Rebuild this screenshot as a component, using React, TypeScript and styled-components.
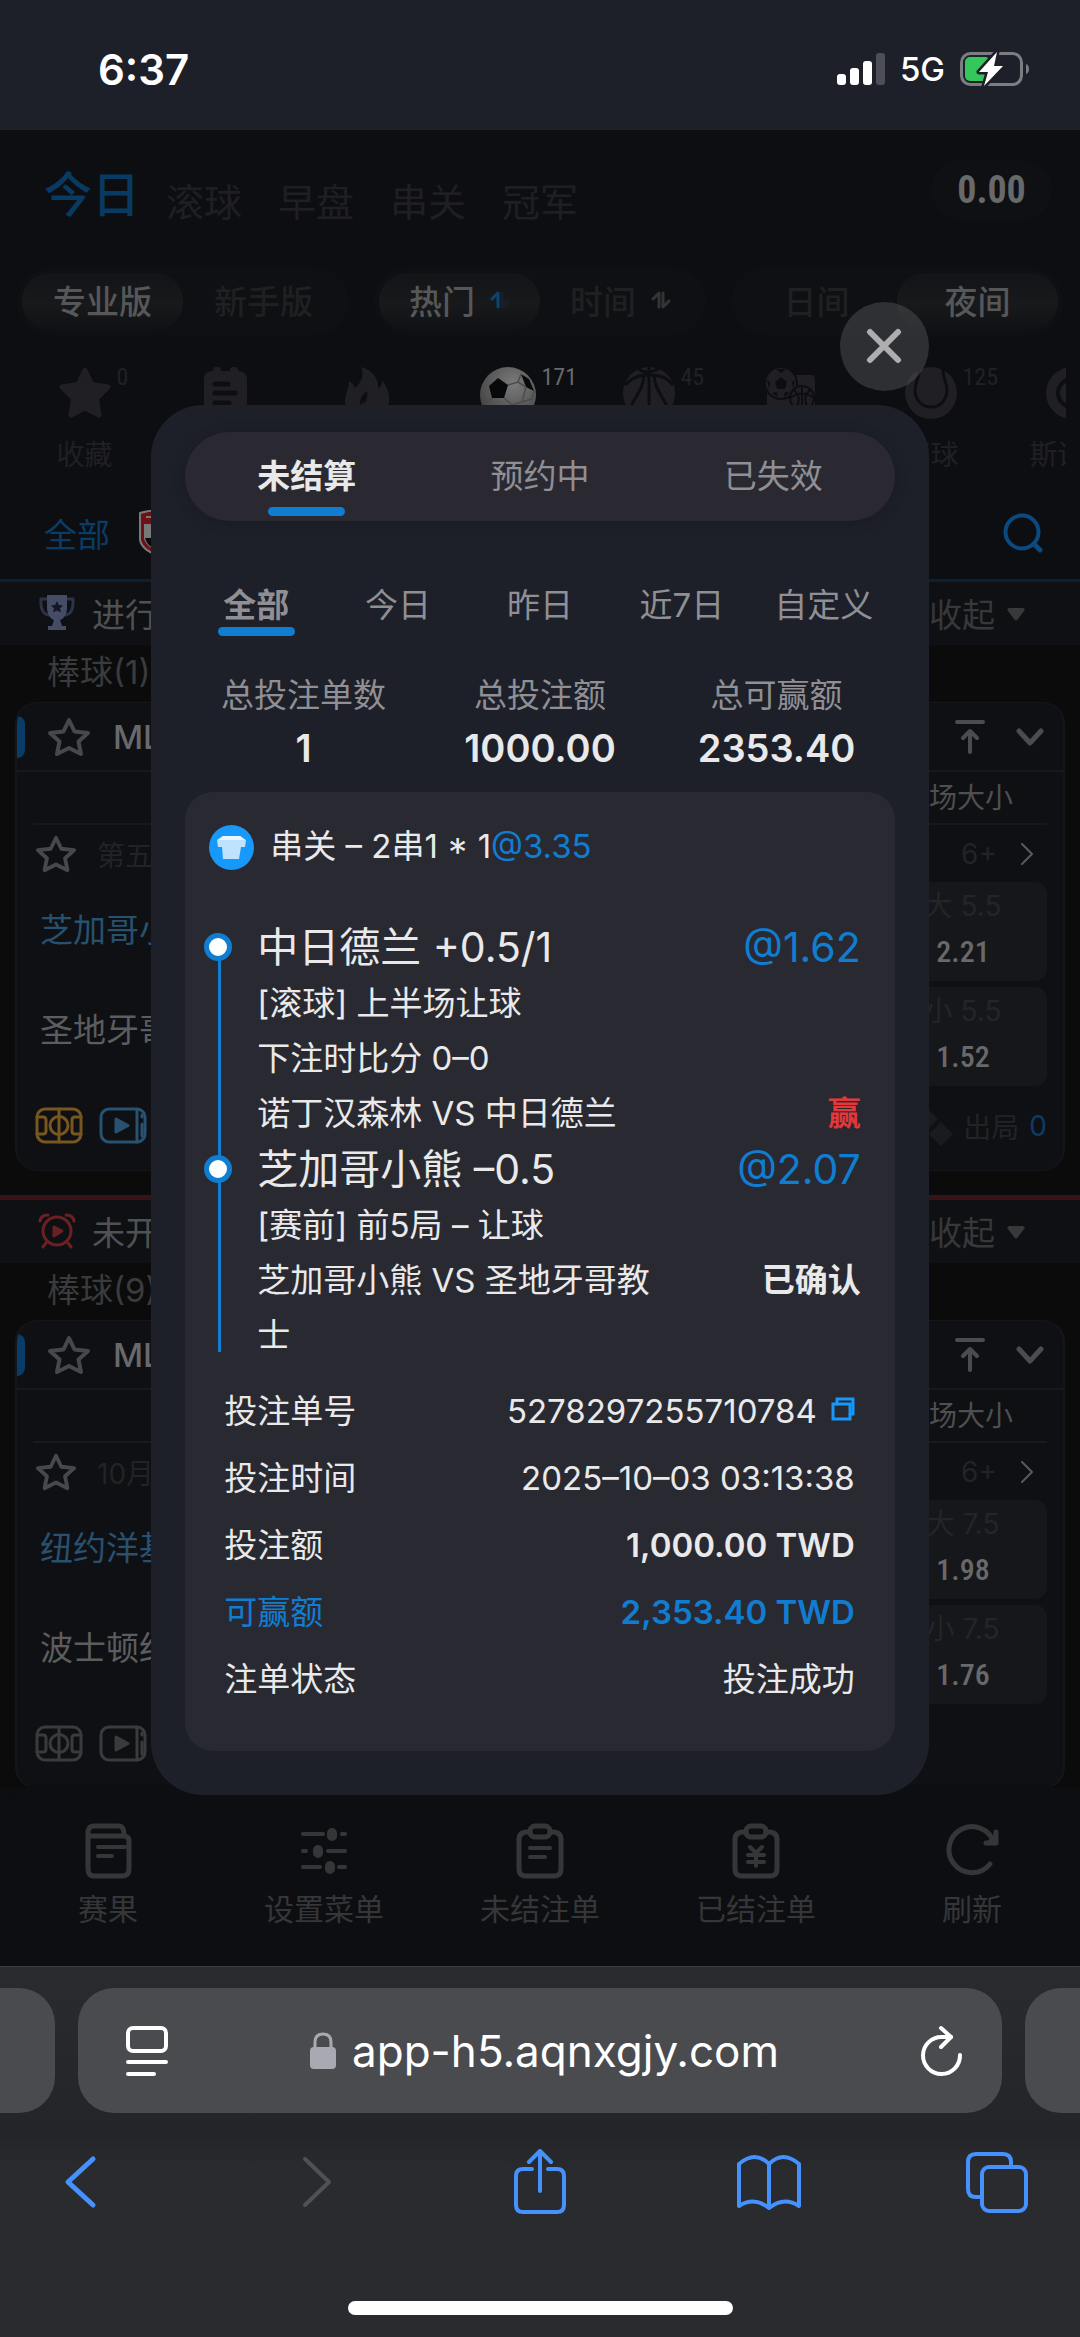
import React from "react";
import styled, { createGlobalStyle, css } from "styled-components";

const blue = "#117dd0";
const iosBlue = "#4592ff";
const condensed = `"Liberation Sans Narrow", "Roboto Condensed", Roboto, sans-serif`;

const GlobalStyle = createGlobalStyle`
  *, *::before, *::after { box-sizing: border-box; }
  body { margin: 0; background: #2a2b2f; }
  button { padding: 0; border: 0; background: none; color: inherit; font: inherit; cursor: pointer; }
  a { color: inherit; text-decoration: none; }
  h2, h3, p, dl, dd, dt, ul { margin: 0; padding: 0; font: inherit; }
  ul { list-style: none; }
  svg { display: block; flex: none; }
`;

const Phone = styled.div`
  display: flex;
  flex-direction: column;
  font-family: Inter, "Noto Sans CJK SC", sans-serif;
  font-size: 33px;
  color: #e9e9ea;
`;

/* ---------- status bar ---------- */

const StatusBar = styled.header`
  display: flex;
  align-items: center;
  justify-content: space-between;
  height: 130px;
  padding: 8px 50px 0 98px;
  background: #1e2029;
  color: #fff;
`;
const Clock = styled.time`
  font-size: 42px;
  font-weight: 600;
`;
const StatusIcons = styled.div`
  display: flex;
  align-items: center;
  gap: 15px;
  font-size: 33px;
  font-weight: 500;
`;

/* ---------- sportsbook page ---------- */

const AppScreen = styled.main`
  position: relative;
  display: flex;
  flex-direction: column;
  overflow: hidden;
  background: #0d0e12;
`;
const TopBar = styled.div`
  display: flex;
  align-items: center;
  justify-content: space-between;
  height: 120px;
  padding: 0 28px 0 44px;
`;
const MainTabs = styled.nav`
  display: flex;
  align-items: flex-end;
  gap: 36px;
  padding-top: 10px;
  color: #1f1f23;
  font-size: 38px;
`;
const MainTab = styled.button<{ $active?: boolean }>`
  line-height: 46px;
  ${(p) =>
    p.$active &&
    css`
      margin-right: -10px;
      color: #093a61;
      font-size: 48px;
      font-weight: 500;
      line-height: 60px;
    `}
`;
const Balance = styled.div`
  width: 121px;
  border-radius: 30px;
  background: #0f1013;
  color: #68696a;
  font-family: ${condensed};
  font-size: 38px;
  font-weight: 700;
  line-height: 60px;
  text-align: center;
`;
const SwitchRow = styled.div`
  display: grid;
  grid-template-columns: repeat(3, 1fr);
  gap: 25px;
  padding: 18px 17px 0;
`;
const SwitchGroup = styled.div`
  display: grid;
  grid-template-columns: 1fr 1fr;
  height: 67px;
  padding: 5px;
  border-radius: 34px;
  background: #0f1013;
`;
const SwitchButton = styled.button<{ $active?: boolean }>`
  display: flex;
  align-items: center;
  justify-content: center;
  gap: 15px;
  padding-bottom: 4px;
  border-radius: 28px;
  color: ${(p) => (p.$active ? "#565758" : "#1f2022")};
  background: ${(p) => (p.$active ? "linear-gradient(#131417, #18191b 55%, #101114)" : "none")};
  font-weight: 500;
`;

const Sports = styled.ul`
  display: flex;
  height: 153px;
  margin: 0 14px;
  padding-top: 32px;
  overflow: hidden;
  color: #202024;
`;
const Sport = styled.li`
  display: flex;
  flex: 0 0 141px;
  flex-direction: column;
  align-items: center;
  gap: 17px;
  font-size: 28px;
  line-height: 38px;
  white-space: nowrap;
`;
const SportIcon = styled.div`
  position: relative;
`;
const Count = styled.span<{ $active?: boolean }>`
  position: absolute;
  top: -4px;
  left: calc(100% + 6px);
  color: ${(p) => (p.$active ? "#68696a" : "#202124")};
  font-family: ${condensed};
  font-size: 24px;
  line-height: 28px;
`;

const LeagueBar = styled.div`
  display: flex;
  align-items: center;
  height: 94px;
  padding: 0 37px 2px 44px;
  border-bottom: 3px solid #0d2133;
  color: #0a3d66;
`;
const LeagueLogo = styled.div`
  flex: 1;
  padding-left: 28px;
`;

const SectionHead = styled.h2<{ $line?: boolean }>`
  display: flex;
  align-items: center;
  height: ${(p) => (p.$line ? 68 : 63)}px;
  padding: 0 55px 2px 38px;
  border-top: ${(p) => (p.$line ? "5px solid #371216" : "0")};
  background: #0f1013;
  color: #505152;
  gap: 16px;
`;
const SectionTitle = styled.span`
  flex: 1;
`;
const Collapse = styled.button`
  display: flex;
  align-items: center;
  gap: 12px;
  color: #37383a;
`;
const ListArea = styled.div`
  background: #0b0b0c;
`;
const Category = styled.h3`
  height: 57px;
  padding-left: 47px;
  color: #3a3b3c;
  line-height: 54px;
`;
const Card = styled.article`
  margin: 0 15px 24px;
  border: 2px solid #14161a;
  border-top-width: 1px;
  border-bottom-width: 1px;
  border-radius: 22px;
  background: #0f1013;
  overflow: hidden;
`;
const LastCard = styled(Card)`
  margin-bottom: 0;
`;
const CardHead = styled.div`
  display: flex;
  align-items: center;
  height: 69px;
  padding-right: 18px;
  border-bottom: 2px solid #17191d;
  color: #68696a;
  font-weight: 500;
`;
const Accent = styled.span`
  width: 8px;
  height: 42px;
  margin-right: 22px;
  border-radius: 0 10px 10px 0;
  background: #093c66;
`;
const LeagueName = styled.span`
  flex: 1;
  padding-left: 22px;
`;
const HeadActions = styled.span`
  display: flex;
  gap: 30px;
  color: #4b4c52;
`;
const CardBody = styled.div`
  padding: 0 16px;
`;
const MarketHead = styled.div`
  height: 53px;
  padding-right: 34px;
  border-bottom: 2px solid #17191d;
  color: #4e4f50;
  font-size: 28px;
  line-height: 53px;
  text-align: right;
`;
const InfoRow = styled.div`
  display: flex;
  align-items: center;
  height: 57px;
  padding: 0 14px 0 2px;
  color: #222326;
  font-size: 28px;
`;
const InfoText = styled.span`
  flex: 1;
  padding-left: 20px;
`;
const InfoMore = styled.button`
  display: flex;
  align-items: center;
  gap: 24px;
`;
const Board = styled.div`
  display: grid;
  grid-template-columns: 1fr 168px;
`;
const Teams = styled.div`
  display: grid;
  grid-template-rows: 92px 108px;
  align-items: center;
  padding-left: 7px;
  color: #5c5d5e;
`;
const HomeTeam = styled.span`
  color: #28506f;
`;
const OddsColumn = styled.div`
  display: grid;
  gap: 6px;
`;
const OddsButton = styled.button`
  display: flex;
  flex-direction: column;
  align-items: center;
  height: 99px;
  padding-top: 1px;
  border-radius: 12px;
  background: #16171a;
  color: #242528;
  font-size: 28px;
  line-height: 46px;
`;
const Price = styled.strong`
  color: #68696a;
  font-family: ${condensed};
  font-size: 30px;
  font-weight: 500;
`;
const CardFoot = styled.div`
  display: flex;
  align-items: center;
  height: 84px;
  gap: 16px;
  padding: 0 0 5px 2px;
  color: #222326;
  font-size: 28px;
`;
const Outs = styled.span`
  display: flex;
  align-items: center;
  flex: 1;
  justify-content: flex-end;
  gap: 10px;
`;
const OutCount = styled.span`
  color: #0a3d66;
`;

const BottomNav = styled.nav`
  position: relative;
  display: grid;
  grid-template-columns: repeat(5, 1fr);
  height: 181px;
  margin-top: -4px;
  padding-top: 38px;
  border-radius: 40px 40px 0 0;
  background: #0d0e12;
`;
const NavButton = styled.button`
  display: flex;
  flex-direction: column;
  align-items: center;
  gap: 10px;
  color: #353638;
  font-size: 30px;
  line-height: 40px;
`;

/* ---------- bet slip dialog ---------- */

const Overlay = styled.div`
  position: absolute;
  inset: 0;
  display: flex;
  align-items: center;
  justify-content: center;
`;
const DialogWrap = styled.div`
  display: flex;
  flex-direction: column;
  width: 72%;
  gap: 14px;
`;
const CloseButton = styled.button`
  display: grid;
  place-items: center;
  align-self: flex-end;
  width: 89px;
  height: 89px;
  border-radius: 50%;
  background: rgba(94, 92, 97, 0.42);
  color: #aeaeb0;
`;
const Dialog = styled.section`
  padding: 27px 34px 44px;
  border-radius: 52px;
  background: #1e2029;
`;
const Underlined = css`
  &::after {
    content: "";
    width: 77px;
    height: 9px;
    border-radius: 5px;
    background: ${blue};
  }
`;
const StatusTabs = styled.div`
  display: grid;
  grid-template-columns: repeat(3, 1fr);
  height: 89px;
  padding: 0 5px;
  border-radius: 45px;
  background: #2a2932;
  box-shadow: 0 2px 12px rgba(16, 17, 24, 0.35);
`;
const StatusTab = styled.button<{ $active?: boolean }>`
  display: flex;
  flex-direction: column;
  align-items: center;
  padding-top: 20px;
  color: ${(p) => (p.$active ? "#e9e9ea" : "#8f8f94")};
  font-weight: ${(p) => (p.$active ? 700 : 400)};
  line-height: 48px;
  gap: 7px;
  ${(p) => p.$active && Underlined}
`;
const DateTabs = styled.div`
  display: grid;
  grid-template-columns: repeat(5, 1fr);
  padding-top: 60px;
`;
const DateTab = styled.button<{ $active?: boolean }>`
  display: flex;
  flex-direction: column;
  align-items: center;
  height: 63px;
  padding-top: 2px;
  color: #8f8f94;
  font-weight: ${(p) => (p.$active ? 700 : 400)};
  line-height: 44px;
  white-space: nowrap;
  ${(p) => p.$active && Underlined}
`;
const Totals = styled.dl`
  display: grid;
  grid-template-columns: repeat(3, 1fr);
  padding: 24px 0 18px;
  text-align: center;
`;
const TotalLabel = styled.dt`
  color: #8f8f94;
  line-height: 54px;
`;
const TotalValue = styled.dd`
  font-size: 38px;
  font-weight: 600;
  line-height: 52px;
`;
const Slip = styled.div`
  padding: 26px 34px 38px 24px;
  border-radius: 28px;
  background: #292932;
`;
const SlipHead = styled.p`
  display: flex;
  align-items: center;
  height: 60px;
  gap: 16px;
  line-height: 56px;
`;
const SlipName = styled.span`
  height: 60px;
`;
const Blue = styled.span`
  color: ${blue};
`;
const Legs = styled.div`
  position: relative;
  margin-top: 41px;
  &::before {
    content: "";
    position: absolute;
    top: 28px;
    bottom: 11px;
    left: 9px;
    width: 3px;
    background: ${blue};
  }
`;
const Leg = styled.div`
  position: relative;
  padding-left: 48px;
  line-height: 55px;
  &::before {
    content: "";
    position: absolute;
    top: 14px;
    left: -5px;
    width: 28px;
    height: 28px;
    border: 5px solid ${blue};
    border-radius: 50%;
    background: #fff;
  }
`;
const LegTitle = styled.h3`
  display: flex;
  justify-content: space-between;
  font-size: 41px;
  line-height: 57px;
`;
const LegMatch = styled.p`
  display: flex;
  align-items: flex-start;
  justify-content: space-between;
`;
const MatchName = styled.span`
  max-width: 69%;
`;
const LegState = styled.strong<{ $win?: boolean }>`
  color: ${(p) => (p.$win ? "#e2383b" : "#e9e9ea")};
`;
const Details = styled.dl`
  padding: 15px 6px 0 15px;
  line-height: 67px;
`;
const DetailRow = styled.div<{ $blue?: boolean }>`
  display: flex;
  justify-content: space-between;
  color: ${(p) => (p.$blue ? blue : "inherit")};
`;
const DetailValue = styled.dd<{ $bold?: boolean }>`
  display: flex;
  gap: 14px;
  font-weight: ${(p) => (p.$bold ? 600 : 400)};
`;
const CopyButton = styled.button`
  height: 62px;
`;

/* ---------- browser chrome ---------- */

const Browser = styled.footer`
  border-top: 1px solid #3f3f42;
  background: linear-gradient(#2a2b2e, #242529 45%, #2a2b2f 55%);
`;
const AddressRow = styled.div`
  display: grid;
  grid-template-columns: 55px 1fr 55px;
  gap: 23px;
  padding-top: 21px;
`;
const SidePage = styled.div<{ $right?: boolean }>`
  border-radius: ${(p) => (p.$right ? "36px 0 0 36px" : "0 36px 36px 0")};
  background: #4a4b4e;
`;
const AddressBar = styled.div`
  display: flex;
  align-items: center;
  justify-content: space-between;
  height: 125px;
  padding: 0 38px 0 47px;
  border-radius: 36px;
  background: #4a4b4e;
  color: #fff;
`;
const Address = styled.a`
  display: flex;
  align-items: center;
  gap: 16px;
  font-size: 44px;
`;
const Toolbar = styled.div`
  display: flex;
  justify-content: space-between;
  padding: 36px 50px 0 46px;
  color: ${iosBlue};
`;
const HomeBar = styled.div`
  width: 385px;
  height: 14px;
  margin: 86px auto 22px;
  border-radius: 7px;
  background: #fff;
`;

/* ---------- icons ---------- */

type StrokeProps = { w: number; h: number; sw?: number; color?: string; children: React.ReactNode };
const Line = ({ w, h, sw = 4, color = "currentColor", children }: StrokeProps) => (
  <svg width={w} height={h} viewBox={`0 0 ${w} ${h}`} fill="none" stroke={color} strokeWidth={sw} strokeLinecap="round" strokeLinejoin="round" aria-hidden="true">
    {children}
  </svg>
);

const Signal = () => (
  <svg width="48" height="32" viewBox="0 0 48 32" fill="#fff" aria-hidden="true">
    <rect x="0" y="21" width="9" height="11" rx="3" />
    <rect x="13" y="15" width="9" height="17" rx="3" />
    <rect x="26" y="8" width="9" height="24" rx="3" />
    <rect x="39" y="0" width="9" height="32" rx="3" fill="#4d4e57" />
  </svg>
);
const Battery = () => (
  <svg width="70" height="36" viewBox="0 0 70 36" aria-hidden="true">
    <rect x="1.5" y="2.5" width="60" height="31" rx="9" fill="none" stroke="#7c7d83" strokeWidth="3" />
    <rect x="5" y="6" width="25" height="24" rx="5" fill="#34c759" />
    <path d="M66 13c4 1 4 9 0 10z" fill="#7c7d83" />
    <path d="M37 1 19 21h9l-4 14 19-20h-9z" fill="#fff" stroke="#1e2029" strokeWidth="5" strokeLinejoin="round" paintOrder="stroke" />
  </svg>
);
const SortArrows = ({ up, down }: { up: string; down: string }) => (
  <svg width="20" height="18" viewBox="0 0 20 18" fill="none" strokeWidth="3" strokeLinecap="round" strokeLinejoin="round" aria-hidden="true">
    <path d="M2 8 8 2v14" stroke={up} />
    <path d="M12 2v14l6-6" stroke={down} />
  </svg>
);
const StarSolid = () => (
  <svg width="52" height="52" viewBox="0 0 52 52" fill="currentColor" stroke="currentColor" strokeWidth="5" strokeLinejoin="round" aria-hidden="true">
    <path d="m26 3 7 14.500 16 2.500-11.500 11.500L40 48l-14-7-14 7 2.500-16.500L3 20l16-2.500z" />
  </svg>
);
const Notes = () => (
  <svg width="52" height="52" viewBox="0 0 52 52" aria-hidden="true">
    <rect x="4" y="4" width="43" height="48" rx="8" fill="currentColor" />
    <rect x="13" y="0" width="8" height="8" rx="3" fill="currentColor" />
    <rect x="30" y="0" width="8" height="8" rx="3" fill="currentColor" />
    <path d="M15 17h13M15 26h20M15 36h14" stroke="#0d0e12" strokeWidth="5" strokeLinecap="round" />
  </svg>
);
const Flame = () => (
  <svg width="52" height="52" viewBox="0 0 52 52" fill="currentColor" aria-hidden="true">
    <path d="M20 0c12 3 18 12 17 22 3-2 4-5 4-9 5 7 8 14 7 22-1 10-10 17-22 17S4 45 4 34c0-8 4-12 4-20 3 2 5 4 6 7 6-5 10-13 6-21z" />
    <path d="M26 24c-5 4-8 9-7 14 2-1 3-3 3-3s1 0 1 2c3-4 4-8 3-13z" fill="#0d0e12" />
  </svg>
);
const SoccerBall = () => (
  <svg width="56" height="56" viewBox="0 0 56 56" aria-hidden="true">
    <defs>
      <radialGradient id="ball" cx="0.6" cy="0.3" r="0.8">
        <stop offset="0" stopColor="#7b7b7b" />
        <stop offset="1" stopColor="#3c3c3c" />
      </radialGradient>
    </defs>
    <circle cx="28" cy="28" r="28" fill="url(#ball)" />
    <path d="m18 11 10 7-4 13H12L9 19zM41 7l8 5 5 12-8-4z M20 54l6-9h10l4 8z" fill="#08090b" />
    <path d="m28 18 10-3 8 5M24 31l8 7-4 9M38 15l3-8M46 20l-4 15-10 3M12 31l-6 5M54 24l-2 8-10 3" stroke="#4c4c4c" strokeWidth="1.500" fill="none" />
  </svg>
);
const Basketball = () => (
  <svg width="52" height="52" viewBox="0 0 52 52" aria-hidden="true">
    <circle cx="26" cy="26" r="26" fill="currentColor" />
    <path d="M26 0v52M14 0c5 6 12 8 24 0M2 18C12 8 20 8 26 8s16 0 24 10M21 8C20 24 12 28 6 44M31 8c1 16 9 20 15 36" stroke="#0d0e12" strokeWidth="3" fill="none" />
  </svg>
);
const ComboSports = () => (
  <svg width="52" height="52" viewBox="0 0 52 52" aria-hidden="true">
    <rect x="3" y="8" width="48" height="44" rx="4" fill="currentColor" />
    <circle cx="17" cy="16" r="17" fill="#0d0e12" />
    <circle cx="17" cy="16" r="15" fill="currentColor" />
    <path d="m17 10 6 5-2 7h-8l-2-7zM12 2h10l-5 4zM3 13l3 2-1 7zM31 13l-3 2 1 7zM8 26l5-1 1 5zM26 26l-5-1-1 5z" fill="#0d0e12" />
    <circle cx="38" cy="31" r="12" fill="currentColor" stroke="#0d0e12" strokeWidth="2" />
    <path d="M38 19v24M26 31c8-6 16-6 24 0M30 23c6 6 6 10 2 18M46 23c-6 6-6 10-2 18" stroke="#0d0e12" strokeWidth="2" fill="none" />
  </svg>
);
const TennisBall = () => (
  <svg width="52" height="52" viewBox="0 0 52 52" aria-hidden="true">
    <circle cx="26" cy="26" r="26" fill="currentColor" />
    <path d="M14 0c1 12-4 14-4 23 0 10 7 17 16 17s16-7 16-17c0-9-5-11-4-23" fill="none" stroke="#0d0e12" strokeWidth="3" />
  </svg>
);
const Snooker = () => (
  <svg width="52" height="52" viewBox="0 0 52 52" aria-hidden="true">
    <circle cx="26" cy="26" r="26" fill="currentColor" />
    <circle cx="26" cy="26" r="14" fill="none" stroke="#0d0e12" strokeWidth="4" />
  </svg>
);
const Shield = () => (
  <svg width="38" height="46" viewBox="0 0 38 46" aria-hidden="true">
    <path d="M2 3Q19-2 36 3v27q-2 10-17 15Q4 40 2 30z" fill="#6d1116" stroke="#77787a" strokeWidth="2" />
    <path d="M6 14h26v15q-2 7-13 12Q8 36 6 29z" fill="#77787a" />
    <path d="M7 28h25q-2 8-13 12Q9 36 7 28z" fill="#08090b" />
    <path d="M8 7h5M16 7h6" stroke="#77787a" strokeWidth="2" />
  </svg>
);
const SearchIcon = () => (
  <Line w={40} h={40} color="#0a4a80">
    <circle cx="19" cy="19" r="16.500" />
    <path d="m31 31 6 6" strokeWidth="5" />
  </Line>
);
const Trophy = () => (
  <svg width="38" height="38" viewBox="0 0 38 38" aria-hidden="true">
    <path d="M9 5H3q-1 16 9 16M29 5h6q1 16-9 16" fill="none" stroke="#2d3347" strokeWidth="3" />
    <path d="M9 1h20v14q-1 9-7 11l2 6h4v4H10v-4h4l2-6q-6-2-7-11z" fill="#444c66" />
    <path d="m19 7 2 4 4 .500-3 3 1 4-4-2-4 2 1-4-3-3 4-.500z" fill="#151824" />
  </svg>
);
const AlarmPlay = () => (
  <Line w={38} h={36} sw={3} color="#6b2024">
    <circle cx="19" cy="18" r="14" />
    <path d="M2 8q1-6 8-6M36 8q-1-6-8-6M8 30l-3 4M30 30l3 4" />
    <path d="m16 14 8 4-8 5z" fill="#6b2024" />
  </Line>
);
const Triangle = () => (
  <svg width="18" height="17" viewBox="0 0 18 17" fill="currentColor" aria-hidden="true">
    <path d="M2 4h14q3 1 1 3l-6 8q-2 3-4 0L1 7Q-1 5 2 4z" />
  </svg>
);
const StarOutline = ({ size }: { size: number }) => (
  <svg width={size} height={size} viewBox="0 0 44 44" fill="none" stroke="#47484b" strokeWidth="4" strokeLinejoin="round" aria-hidden="true">
    <path d="m22 5 5.500 11.500L41 18l-9.500 8.500L34 39l-12-6-12 6 2.500-12.500L3 18l13.500-1.500z" />
  </svg>
);
const ToTop = () => (
  <Line w={30} h={34}>
    <path d="M2 2h26M15 32V12M8 18l7-7 7 7" />
  </Line>
);
const ChevronDown = () => (
  <Line w={30} h={34} sw={5}>
    <path d="m4 11 11 12 11-12" />
  </Line>
);
const ThinChevron = () => (
  <Line w={12} h={22} sw={2} color="#58595b">
    <path d="m1 1 10 10L1 21" />
  </Line>
);
const Court = ({ color }: { color: string }) => (
  <Line w={48} h={37} sw={3} color={color}>
    <rect x="2" y="2" width="44" height="33" rx="8" />
    <circle cx="24" cy="18.500" r="9" />
    <path d="M24 2v33M2 10h6q3 0 3 3v11q0 3-3 3H2M46 10h-6q-3 0-3 3v11q0 3 3 3h6" />
  </Line>
);
const LiveVideo = ({ color }: { color: string }) => (
  <Line w={48} h={37} sw={3} color={color}>
    <rect x="2" y="2" width="44" height="33" rx="8" />
    <path d="M38 2v33M43 8v2M43 17v12" />
    <path d="m17 12 12 6.500L17 25z" fill={color} />
  </Line>
);
const Bases = () => (
  <svg width="54" height="40" viewBox="0 0 54 40" fill="#1a1b1e" aria-hidden="true">
    <path d="m12 16 12 12-12 12L0 28zM27 1l12 12-12 12-12-12zM42 16l12 12-12 12-12-12z" />
  </svg>
);
const Jersey = () => (
  <svg width="45" height="45" viewBox="0 0 45 45" aria-hidden="true">
    <circle cx="22.500" cy="22.500" r="22.500" fill="#1799fb" />
    <path d="M14 11h17l6 4-1 7h-4l-2 12H14l-1-12H9l-1-7z" fill="#bfe2ff" />
    <path d="M14 11h17l5 4H9z" fill="#e9f6ff" />
  </svg>
);
const CopyIcon = () => (
  <Line w={24} h={24} sw={3} color="#1799fb">
    <path d="M2 7h17v15H2z" strokeLinejoin="miter" />
    <path d="M6 7V2h16v15h-3" strokeLinejoin="miter" />
  </Line>
);
const ResultsIcon = () => (
  <Line w={56} h={56} sw={5}>
    <path d="M8 13v33q0 7 6 7h28q7 0 7-7V18q0-5-6-5H12q-5 0-4-5 1-5 6-5h25q5 0 5 9" />
    <path d="M18 24h27M18 33h14" strokeWidth="4" />
  </Line>
);
const SlidersIcon = () => (
  <Line w={56} h={56} sw={4}>
    <path d="M7 11h20M46 11h3M7 28h3M32 28h17M7 44h17M43 44h6" />
    <g fill="currentColor"><rect x="33" y="7" width="6" height="9" rx="3" /><rect x="19" y="24" width="6" height="9" rx="3" /><rect x="31" y="40" width="6" height="9" rx="3" /></g>
  </Line>
);
const ClipboardIcon = ({ yen }: { yen?: boolean }) => (
  <Line w={56} h={56} sw={5}>
    <path d="M18 9h-3q-8 0-8 8v29q0 7 7 7h28q7 0 7-7V17q0-8-8-8h-3" />
    <rect x="18" y="3" width="20" height="11" rx="5" />
    {yen ? <path d="m22 24 6 6 6-6M28 30v13M20 32h16M20 39h16" strokeWidth="4" /> : <path d="M18 25h20M18 34h15" strokeWidth="4" />}
  </Line>
);
const ReloadIcon = () => (
  <Line w={56} h={56} sw={5}>
    <path d="M46 41A23 23 0 1 1 50 20" />
    <path d="m42 20 10 0V9" fill="currentColor" />
  </Line>
);
const CloseIcon = () => (
  <Line w={36} h={36} sw={6}>
    <path d="m4 4 28 28M32 4 4 32" />
  </Line>
);
const ReaderIcon = () => (
  <Line w={44} h={52}>
    <rect x="3" y="3" width="38" height="23" rx="5" />
    <path d="M3 37h38M3 49h26" />
  </Line>
);
const LockIcon = () => (
  <svg width="26" height="38" viewBox="0 0 26 38" fill="#a9a9b2" aria-hidden="true">
    <rect y="15" width="26" height="22" rx="4" />
    <path d="M5 17v-7q0-8 8-8t8 8v7" fill="none" stroke="#a9a9b2" strokeWidth="3" />
  </svg>
);
const RefreshIcon = () => (
  <Line w={44} h={52}>
    <path d="M40 30A18.500 18.500 0 1 1 22 12h9" />
    <path d="m21 3 10 9-10 10" />
  </Line>
);
const BackIcon = () => (
  <Line w={66} h={66} sw={5}>
    <path d="M47 10 22 33l25 23" />
  </Line>
);
const ForwardIcon = () => (
  <Line w={66} h={66} sw={4} color="#505154">
    <path d="m29 10 24 23-24 23" />
  </Line>
);
const ShareIcon = () => (
  <Line w={66} h={66}>
    <path d="M27 20h-9q-7 0-7 7v29q0 7 7 7h34q7 0 7-7V27q0-7-7-7h-9M35 42V3M24 13 35 2l11 11" />
  </Line>
);
const BookIcon = () => (
  <Line w={66} h={66}>
    <path d="M34 15Q20 1 4 15v42q15-10 30 2 15-12 30-2V15Q48 1 34 15zM34 15v42" />
  </Line>
);
const TabsIcon = () => (
  <Line w={66} h={66}>
    <rect x="18" y="18" width="44" height="44" rx="7" />
    <path d="M47 18v-5q0-8-8-8H12q-8 0-8 8v27q0 8 8 8h6" />
  </Line>
);

/* ---------- data ---------- */

type Match = {
  info: string;
  home: string;
  away: string;
  over: [string, string];
  under: [string, string];
  live?: boolean;
};
const liveMatch: Match = { info: "第五局", home: "芝加哥小熊", away: "圣地牙哥教士", over: ["大 5.5", "2.21"], under: ["小 5.5", "1.52"], live: true };
const nextMatch: Match = { info: "10月03日", home: "纽约洋基", away: "波士顿红袜", over: ["大 7.5", "1.98"], under: ["小 7.5", "1.76"] };

type SportItem = { id: string; name?: string; count?: string; icon: React.ReactNode; active?: boolean };
const sports: SportItem[] = [
  { id: "favourites", name: "收藏", count: "0", icon: <StarSolid /> },
  { id: "schedule", icon: <Notes /> },
  { id: "hot", icon: <Flame /> },
  { id: "soccer", count: "171", icon: <SoccerBall />, active: true },
  { id: "basketball", count: "45", icon: <Basketball /> },
  { id: "combo", icon: <ComboSports /> },
  { id: "tennis", name: "网球", count: "125", icon: <TennisBall /> },
  { id: "snooker", name: "斯诺克", icon: <Snooker /> },
];

const MatchCard = ({ match, last }: { match: Match; last?: boolean }) => {
  const Wrapper = last ? LastCard : Card;
  return (
    <Wrapper>
      <CardHead>
        <Accent />
        <StarOutline size={44} />
        <LeagueName>MLB</LeagueName>
        <HeadActions>
          <ToTop />
          <ChevronDown />
        </HeadActions>
      </CardHead>
      <CardBody>
        <MarketHead>全场大小</MarketHead>
        <InfoRow>
          <StarOutline size={42} />
          <InfoText>{match.info}</InfoText>
          <InfoMore>
            6+
            <ThinChevron />
          </InfoMore>
        </InfoRow>
        <Board>
          <Teams>
            <HomeTeam>{match.home}</HomeTeam>
            <span>{match.away}</span>
          </Teams>
          <OddsColumn>
            {[match.over, match.under].map(([label, price]) => (
              <OddsButton key={label}>
                {label}
                <Price>{price}</Price>
              </OddsButton>
            ))}
          </OddsColumn>
        </Board>
        <CardFoot>
          <Court color={match.live ? "#77561f" : "#3a3b3d"} />
          <LiveVideo color={match.live ? "#295272" : "#3a3b3d"} />
          {match.live && (
            <Outs>
              <Bases />
              出局 <OutCount>0</OutCount>
            </Outs>
          )}
        </CardFoot>
      </CardBody>
    </Wrapper>
  );
};

export default function App() {
  return (
    <Phone>
      <GlobalStyle />
      <StatusBar>
        <Clock>6:37</Clock>
        <StatusIcons>
          <Signal />
          5G
          <Battery />
        </StatusIcons>
      </StatusBar>

      <AppScreen>
        <TopBar>
          <MainTabs>
            <MainTab $active>今日</MainTab>
            <MainTab>滚球</MainTab>
            <MainTab>早盘</MainTab>
            <MainTab>串关</MainTab>
            <MainTab>冠军</MainTab>
          </MainTabs>
          <Balance>0.00</Balance>
        </TopBar>
        <SwitchRow>
          <SwitchGroup>
            <SwitchButton $active>专业版</SwitchButton>
            <SwitchButton>新手版</SwitchButton>
          </SwitchGroup>
          <SwitchGroup>
            <SwitchButton $active>
              热门
              <SortArrows up="#0b4577" down="#161f30" />
            </SwitchButton>
            <SwitchButton>
              时间
              <SortArrows up="#333436" down="#333436" />
            </SwitchButton>
          </SwitchGroup>
          <SwitchGroup>
            <SwitchButton>日间</SwitchButton>
            <SwitchButton $active>夜间</SwitchButton>
          </SwitchGroup>
        </SwitchRow>
        <Sports>
          {sports.map((s) => (
            <Sport key={s.id}>
              <SportIcon>
                {s.icon}
                {s.count && <Count $active={s.active}>{s.count}</Count>}
              </SportIcon>
              {s.name}
            </Sport>
          ))}
        </Sports>
        <LeagueBar>
          <button>全部</button>
          <LeagueLogo>
            <Shield />
          </LeagueLogo>
          <button aria-label="搜索">
            <SearchIcon />
          </button>
        </LeagueBar>
        <ListArea>
          <SectionHead>
            <Trophy />
            <SectionTitle>进行中</SectionTitle>
            <Collapse>
              收起 <Triangle />
            </Collapse>
          </SectionHead>
          <Category>棒球(1)</Category>
          <MatchCard match={liveMatch} />
          <SectionHead $line>
            <AlarmPlay />
            <SectionTitle>未开赛</SectionTitle>
            <Collapse>
              收起 <Triangle />
            </Collapse>
          </SectionHead>
          <Category>棒球(9)</Category>
          <MatchCard match={nextMatch} last />
        </ListArea>
        <BottomNav>
          <NavButton><ResultsIcon />赛果</NavButton>
          <NavButton><SlidersIcon />设置菜单</NavButton>
          <NavButton><ClipboardIcon />未结注单</NavButton>
          <NavButton><ClipboardIcon yen />已结注单</NavButton>
          <NavButton><ReloadIcon />刷新</NavButton>
        </BottomNav>

        <Overlay>
          <DialogWrap>
            <CloseButton aria-label="关闭">
              <CloseIcon />
            </CloseButton>
            <Dialog role="dialog" aria-label="注单">
              <StatusTabs>
                <StatusTab $active>未结算</StatusTab>
                <StatusTab>预约中</StatusTab>
                <StatusTab>已失效</StatusTab>
              </StatusTabs>
              <DateTabs>
                <DateTab $active>全部</DateTab>
                <DateTab>今日</DateTab>
                <DateTab>昨日</DateTab>
                <DateTab>近7日</DateTab>
                <DateTab>自定义</DateTab>
              </DateTabs>
              <Totals>
                <div>
                  <TotalLabel>总投注单数</TotalLabel>
                  <TotalValue>1</TotalValue>
                </div>
                <div>
                  <TotalLabel>总投注额</TotalLabel>
                  <TotalValue>1000.00</TotalValue>
                </div>
                <div>
                  <TotalLabel>总可赢额</TotalLabel>
                  <TotalValue>2353.40</TotalValue>
                </div>
              </Totals>
              <Slip>
                <SlipHead>
                  <Jersey />
                  <SlipName>
                    串关 – 2串1 * 1<Blue>@3.35</Blue>
                  </SlipName>
                </SlipHead>
                <Legs>
                  <Leg>
                    <LegTitle>
                      <span>中日德兰 +0.5/1</span>
                      <Blue>@1.62</Blue>
                    </LegTitle>
                    <p>[滚球] 上半场让球</p>
                    <p>下注时比分 0–0</p>
                    <LegMatch>
                      <MatchName>诺丁汉森林 VS 中日德兰</MatchName>
                      <LegState $win>赢</LegState>
                    </LegMatch>
                  </Leg>
                  <Leg>
                    <LegTitle>
                      <span>芝加哥小熊 –0.5</span>
                      <Blue>@2.07</Blue>
                    </LegTitle>
                    <p>[赛前] 前5局 – 让球</p>
                    <LegMatch>
                      <MatchName>芝加哥小熊 VS 圣地牙哥教士</MatchName>
                      <LegState>已确认</LegState>
                    </LegMatch>
                  </Leg>
                </Legs>
                <Details>
                  <DetailRow>
                    <dt>投注单号</dt>
                    <DetailValue>
                      5278297255710784
                      <CopyButton aria-label="复制">
                        <CopyIcon />
                      </CopyButton>
                    </DetailValue>
                  </DetailRow>
                  <DetailRow>
                    <dt>投注时间</dt>
                    <DetailValue>2025–10–03 03:13:38</DetailValue>
                  </DetailRow>
                  <DetailRow>
                    <dt>投注额</dt>
                    <DetailValue $bold>1,000.00 TWD</DetailValue>
                  </DetailRow>
                  <DetailRow $blue>
                    <dt>可赢额</dt>
                    <DetailValue $bold>2,353.40 TWD</DetailValue>
                  </DetailRow>
                  <DetailRow>
                    <dt>注单状态</dt>
                    <DetailValue>投注成功</DetailValue>
                  </DetailRow>
                </Details>
              </Slip>
            </Dialog>
          </DialogWrap>
        </Overlay>
      </AppScreen>

      <Browser>
        <AddressRow>
          <SidePage />
          <AddressBar>
            <button aria-label="页面菜单">
              <ReaderIcon />
            </button>
            <Address href="#">
              <LockIcon />
              app-h5.aqnxgjy.com
            </Address>
            <button aria-label="重新载入">
              <RefreshIcon />
            </button>
          </AddressBar>
          <SidePage $right />
        </AddressRow>
        <Toolbar>
          <button aria-label="后退"><BackIcon /></button>
          <button aria-label="前进"><ForwardIcon /></button>
          <button aria-label="分享"><ShareIcon /></button>
          <button aria-label="书签"><BookIcon /></button>
          <button aria-label="标签页"><TabsIcon /></button>
        </Toolbar>
        <HomeBar />
      </Browser>
    </Phone>
  );
}
